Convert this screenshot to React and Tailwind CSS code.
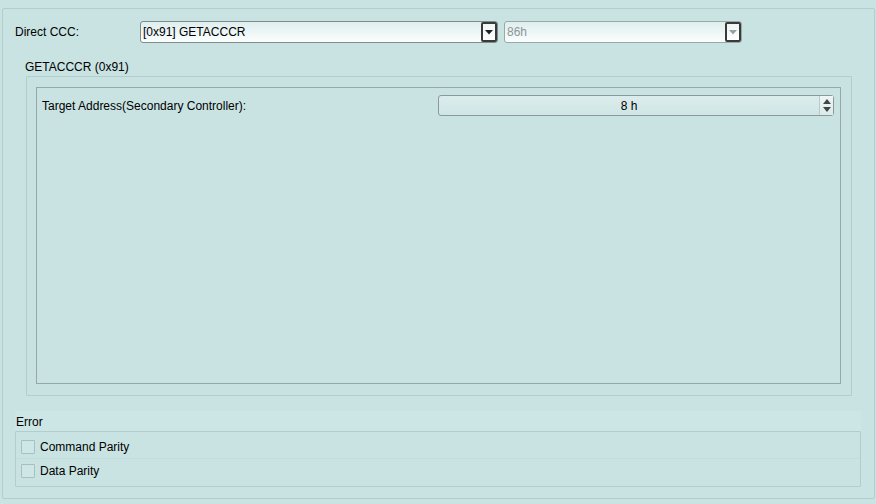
import React from "react";

function Combo({ width, text, disabled }) {
  return (
    <div
      className={`flex h-[22px] items-stretch rounded-[3px] border ${disabled ? "border-[#9aa8a8]" : "border-[#808c8c]"} bg-gradient-to-b from-[#dfeeee] to-[#fbfefe]`}
      style={{ width }}
    >
      <div className={`flex flex-1 items-center pl-[2px] text-[12px] ${disabled ? "text-[#8c9696]" : "text-black"}`}>{text}</div>
      <div className="flex w-[16px] items-center justify-center rounded-[2px] border-[2px] border-[#3a3a3a] bg-gradient-to-b from-[#eef6f6] to-white">
        <svg width="8" height="5" viewBox="0 0 8 5">
          <path d="M0 0 H8 L4 4.5 Z" fill={disabled ? "#9aa0a0" : "#222"} />
        </svg>
      </div>
    </div>
  );
}

function Check({ label }) {
  return (
    <div className="flex h-[23px] items-center gap-[5px] pl-[5px]">
      <div className="h-[14px] w-[14px] rounded-[1px] border border-[#a9bfbf] bg-[#cde6e6]" />
      <span className="text-[12px] text-black">{label}</span>
    </div>
  );
}

export default function App() {
  return (
    <div
      className="h-[504px] w-[876px] bg-[#c9e3e3] pl-[2px] pr-[1px] pt-[8px] pb-[5px]"
      style={{ fontFamily: '"Liberation Sans", Arial, sans-serif' }}
    >
      <div className="h-[491px] rounded-[2px] border border-[#b3cccc] bg-[#c9e3e3]">
        {/* top row */}
        <div className="mt-[12px] flex h-[22px] items-center pl-[12px]">
          <div className="w-[125px] text-[12px] text-black">Direct CCC:</div>
          <Combo width={358} text="[0x91] GETACCCR" />
          <div className="w-[6px]" />
          <Combo width={238} text="86h" disabled />
        </div>

        {/* group title */}
        <div className="mt-[16px] h-[17px] pl-[22px] text-[12px] leading-[17px] text-black">GETACCCR (0x91)</div>

        {/* group box */}
        <div className="ml-[23px] h-[320px] w-[826px] rounded-[1px] border border-[#b3cdcd] bg-[#c8e2e2] pl-[9px] pt-[10px]">
          <div className="h-[297px] w-[805px] border border-[#93a8a8] bg-[#c9e3e3] pl-[5px] pt-[7px]">
            <div className="flex h-[21px] items-center">
              <div className="w-[396px] text-[12px] text-black">Target Address(Secondary Controller):</div>
              <div className="flex h-[21px] w-[396px] items-stretch rounded-[3px] border border-[#8a9999] bg-gradient-to-b from-[#dcecec] to-[#cfe6e6]">
                <div className="flex flex-1 items-center justify-center text-[12px] text-black">8 h</div>
                <div className="flex w-[14px] flex-col items-center justify-center gap-[3px] border-l border-[#b8caca] bg-gradient-to-b from-[#eef6f6] to-[#dbeaea]">
                  <svg width="8" height="5" viewBox="0 0 8 5">
                    <path d="M0 5 H8 L4 0 Z" fill="#444" />
                  </svg>
                  <svg width="8" height="5" viewBox="0 0 8 5">
                    <path d="M0 0 H8 L4 5 Z" fill="#444" />
                  </svg>
                </div>
              </div>
            </div>
          </div>
        </div>

        {/* error */}
        <div className="ml-[12px] mt-[15px] flex h-[20px] w-[846px] items-center bg-[#cce5e5] pl-[1px] pt-[1px] text-[12px] text-black">
          Error
        </div>
        <div className="ml-[12px] h-[56px] w-[846px] rounded-[1px] border border-[#b3cdcd] bg-[#c9e3e3] pt-[3px]">
          <div className="border-b border-[#c3dddd]">
            <Check label="Command Parity" />
          </div>
          <Check label="Data Parity" />
        </div>
      </div>
    </div>
  );
}
